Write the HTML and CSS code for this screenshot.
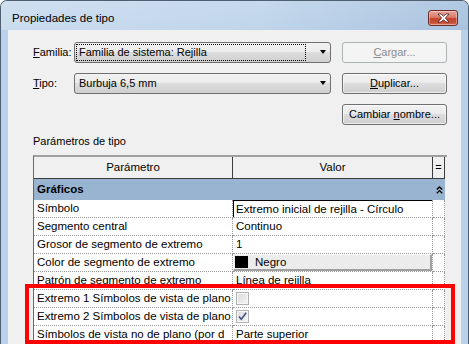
FILE: index.html
```html
<!DOCTYPE html>
<html lang="es">

<head>
    <meta charset="UTF-8">
    <title>Propiedades de tipo</title>
    <link rel="stylesheet" href="styles.css">
</head>

<body>
    <div class="window">
        <div class="titlebar">
            <span class="title">Propiedades de tipo</span>
            <button class="close-btn">
                <svg width="13" height="10" viewBox="0 0 13 10">
                    <path d="M1 1 H4 L6.5 3.3 L9 1 H12 L8.3 5 L12 9 H9 L6.5 6.7 L4 9 H1 L4.7 5 Z" fill="#fff" stroke="#4a2222" stroke-width="0.8" stroke-linejoin="round" />
                </svg>
            </button>
        </div>

        <div class="client">
            <div class="form-grid">
                <label class="form-label"><u>F</u>amilia:</label>
                <div class="combo">
                    <span class="combo-text focus">Familia de sistema: Rejilla</span>
                    <span class="combo-arrow"></span>
                </div>
                <button class="btn" disabled><u>C</u>argar...</button>

                <label class="form-label"><u>T</u>ipo:</label>
                <div class="combo">
                    <span class="combo-text">Burbuja 6,5 mm</span>
                    <span class="combo-arrow"></span>
                </div>
                <button class="btn"><u>D</u>uplicar...</button>

                <button class="btn btn-wide">Cambiar <u>n</u>ombre...</button>
            </div>

            <div class="section-label">Parámetros de tipo</div>

            <div class="prop-grid">
                <div class="row head">
                    <div class="cell">Parámetro</div>
                    <div class="cell">Valor</div>
                    <div class="cell">=</div>
                </div>
                <div class="row group">
                    <div class="cell">Gráficos</div>
                    <div class="cell"></div>
                    <div class="cell chevron">
                        <svg width="7" height="8" viewBox="0 0 7 8">
                            <path d="M0.8 3.6 L3.5 1 L6.2 3.6 M0.8 7.2 L3.5 4.6 L6.2 7.2" fill="none" stroke="#000" stroke-width="1.4" />
                        </svg>
                    </div>
                </div>
                <div class="row">
                    <div class="cell">Símbolo</div>
                    <div class="cell"><div class="edit-box">Extremo inicial de rejilla - Círculo</div></div>
                    <div class="cell"></div>
                </div>
                <div class="row">
                    <div class="cell">Segmento central</div>
                    <div class="cell">Continuo</div>
                    <div class="cell"></div>
                </div>
                <div class="row">
                    <div class="cell">Grosor de segmento de extremo</div>
                    <div class="cell">1</div>
                    <div class="cell"></div>
                </div>
                <div class="row">
                    <div class="cell">Color de segmento de extremo</div>
                    <div class="cell flat">
                        <div class="color-btn"><span class="swatch"></span>Negro</div>
                    </div>
                    <div class="cell"></div>
                </div>
                <div class="row">
                    <div class="cell">Patrón de segmento de extremo</div>
                    <div class="cell">Línea de rejilla</div>
                    <div class="cell"></div>
                </div>
                <div class="row">
                    <div class="cell">Extremo 1 Símbolos de vista de plano</div>
                    <div class="cell"><span class="check"></span></div>
                    <div class="cell"></div>
                </div>
                <div class="row">
                    <div class="cell">Extremo 2 Símbolos de vista de plano</div>
                    <div class="cell">
                        <span class="check">
                            <svg width="11" height="11" viewBox="0 0 11 11">
                                <path d="M2 5.5 L4.3 8.3 L9.2 1.8" fill="none" stroke="#3d5488" stroke-width="1.6" />
                            </svg>
                        </span>
                    </div>
                    <div class="cell"></div>
                </div>
                <div class="row">
                    <div class="cell">Símbolos de vista no de plano (por d</div>
                    <div class="cell">Parte superior</div>
                    <div class="cell"></div>
                </div>
            </div>
        </div>

        <!-- marca roja de la captura -->
        <div class="highlight"></div>
    </div>
</body>

</html>
```

FILE: styles.css
```css
* {
    margin: 0;
    padding: 0;
    box-sizing: border-box;
}

body {
    width: 469px;
    height: 344px;
    overflow: hidden;
    background: #fff;
    font-family: 'Liberation Sans', Arial, sans-serif;
    font-size: 11px;
    color: #000;
}

.window {
    position: relative;
    width: 469px;
    height: 370px;
    display: flex;
    flex-direction: column;
    background: #b9d1ea;
    border: 1px solid #4e6072;
    border-bottom: none;
    border-radius: 7px 7px 0 0;
    padding: 0 7px;
}

.titlebar {
    height: 29px;
    margin: 0 -7px;
    padding: 0 10px 0 11px;
    display: flex;
    justify-content: space-between;
    align-items: flex-start;
    border-radius: 6px 6px 0 0;
    background:
        linear-gradient(180deg, rgba(255, 255, 255, 0.1), rgba(255, 255, 255, 0)),
        linear-gradient(90deg, #cadcef 0%, #c0d5eb 55%, #a9c3df 100%);
}

.title {
    margin-top: 10px;
    font-size: 11.5px;
    line-height: 14px;
}

.close-btn {
    margin-top: 9px;
    width: 30px;
    height: 16px;
    border: 1px solid #6b2b28;
    border-radius: 3px;
    background: linear-gradient(180deg, #e6a597 0%, #d97c6a 45%, #c4412b 55%, #c84f37 85%, #d9806a 100%);
    box-shadow: inset 0 0 0 1px rgba(255, 255, 255, 0.35);
    display: flex;
    justify-content: center;
    align-items: center;
}

.client {
    flex: 1;
    background: #f0f0f0;
    padding: 11px 14px 0 25px;
}

.form-grid {
    display: grid;
    grid-template-columns: 30px 257px 105px;
    grid-auto-rows: 22px;
    column-gap: 11px;
    row-gap: 9px;
    align-items: center;
}

.form-label {
    line-height: 14px;
    white-space: nowrap;
}

.combo {
    height: 21px;
    display: flex;
    align-items: center;
    border: 1px solid #707070;
    border-radius: 3px;
    background: linear-gradient(180deg, #f2f2f2 0%, #ebebeb 50%, #dddddd 50%, #cfcfcf 100%);
    padding: 0 4px 0 1px;
}

.combo-text {
    flex: 1;
    height: 17px;
    line-height: 15px;
    padding-left: 2px;
    margin-right: 14px;
    border: 1px solid transparent;
}

.combo-text.focus {
    border: 1px dotted #000;
}

.combo-arrow {
    width: 0;
    height: 0;
    border-left: 3.5px solid transparent;
    border-right: 3.5px solid transparent;
    border-top: 4px solid #000;
}

.btn {
    height: 21px;
    font-family: inherit;
    font-size: 11px;
    color: #000;
    border: 1px solid #707070;
    border-radius: 3px;
    background: linear-gradient(180deg, #f2f2f2 0%, #ebebeb 50%, #dddddd 50%, #cfcfcf 100%);
    box-shadow: inset 0 0 0 1px rgba(255, 255, 255, 0.6);
}

.btn:disabled {
    color: #8b8b8b;
    border-color: #adb2b5;
    background: #f4f4f4;
    box-shadow: none;
}

.btn-wide {
    grid-column: 3;
}

.section-label {
    margin-top: 9px;
    line-height: 14px;
}

/* rejilla de propiedades */
.prop-grid {
    margin-top: 7px;
    width: 414px;
    border-top: 2px solid #a0a0a0;
    border-left: 1px solid #696969;
    font-size: 11.5px;
}

.row {
    display: grid;
    grid-template-columns: 199px 200px 12px;
    height: 18px;
}

.cell {
    background: #fff;
    border-right: 1px dotted #9a9a9a;
    border-bottom: 1px dotted #9a9a9a;
    padding-left: 3px;
    line-height: 17px;
    white-space: nowrap;
    overflow: hidden;
}

.head {
    height: 22px;
}

.head .cell {
    background: #f0f0f0;
    border-right: 1px solid #3c3c3c;
    border-bottom: 1px solid #3c3c3c;
    text-align: center;
    padding-left: 0;
    line-height: 21px;
}

.head .cell:last-child {
    font-size: 11px;
}

.group {
    height: 21px;
}

.group .cell {
    background: #99b4d1;
    border: none;
    font-weight: bold;
    line-height: 21px;
}

.group .chevron {
    padding-left: 0;
    display: flex;
    align-items: center;
    justify-content: center;
}

.edit-box {
    height: 18px;
    margin: 0 -1px -1px -3px;
    border: 1px solid #000;
    padding-left: 2px;
    line-height: 16px;
}

.cell.flat {
    padding: 0;
}

.color-btn {
    height: 17px;
    display: flex;
    align-items: center;
    background: #ececec;
    border-top: 1px solid #fff;
    border-left: 1px solid #fff;
    border-right: 2px solid #a0a0a0;
    border-bottom: 2px solid #a0a0a0;
    padding-left: 1px;
}

.swatch {
    width: 13px;
    height: 12px;
    background: #000;
    margin-right: 7px;
}

.check {
    display: inline-flex;
    align-items: center;
    justify-content: center;
    width: 13px;
    height: 13px;
    margin-top: 2px;
    vertical-align: top;
    border: 1px solid #b2b2b2;
    background: linear-gradient(135deg, #dcdcdc, #f4f4f4);
    box-shadow: inset 0 0 0 1px #f7f7f7;
}

.highlight {
    position: absolute;
    left: 24px;
    top: 283px;
    width: 430px;
    height: 60px;
    border: 4px solid #f00;
}
```
